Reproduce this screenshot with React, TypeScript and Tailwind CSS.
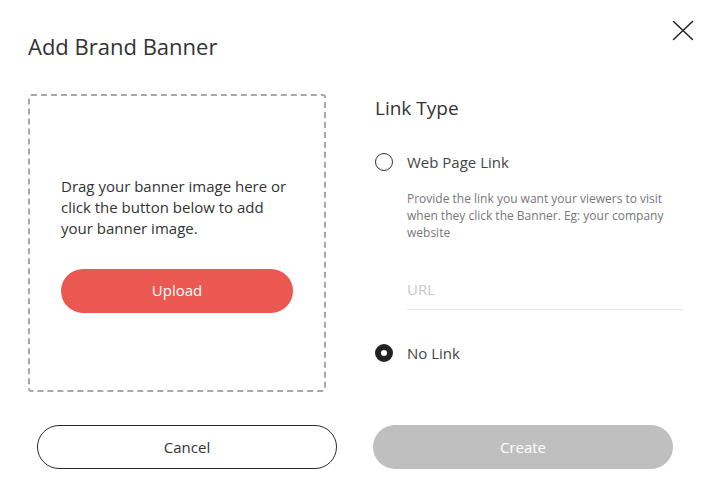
function Radio({ checked, label }: { checked?: boolean; label: string }) {
  return (
    <label className="flex items-center h-[22px]">
      {checked ? (
        <span className="w-[18px] h-[18px] rounded-full border-[6px] border-[#222]" />
      ) : (
        <span className="w-[18px] h-[18px] rounded-full border border-[#333]" />
      )}
      <span className="ml-[14px] text-[15px] text-[#444]">{label}</span>
    </label>
  );
}

export default function App() {
  return (
    <div
      className="relative w-[707px] h-[497px] bg-white text-[#333]"
      style={{ fontFamily: '"Open Sans", "Noto Sans", sans-serif' }}
    >
      <button className="absolute left-[672px] top-[20px] text-[#222]">
        <svg width="22" height="21" viewBox="0 0 22 21" fill="none" stroke="currentColor" strokeWidth="1.5" strokeLinecap="round">
          <path d="M1.5 1.5 L20.5 19.5 M20.5 1.5 L1.5 19.5" />
        </svg>
      </button>

      <h1 className="pl-[28px] pt-[31px] text-[22px] leading-[30px] text-[#333]">
        Add Brand Banner
      </h1>

      <div className="flex mt-[33px] pl-[28px]">
        <div className="w-[298px] h-[298px] border-2 border-dashed border-[#a8a8a8] rounded-[3px] flex flex-col justify-center px-[31px] pt-[2px]">
          <p className="text-[15px] leading-[21px] text-[#333]">
            Drag your banner image here or
            <br />
            click the button below to add
            <br />
            your banner image.
          </p>
          <button className="mt-[30px] h-[44px] w-full rounded-full bg-[#eb5851] text-white text-[15px]">
            Upload
          </button>
        </div>

        <div className="ml-[49px] w-[308px] pt-[1px]">
          <h2 className="text-[19px] leading-[26px] text-[#333]">Link Type</h2>
          <div className="mt-[30px]">
            <Radio label="Web Page Link" />
          </div>
          <div className="pl-[32px]">
            <p className="mt-[17px] text-[12px] leading-[17px] text-[#777]">
              Provide the link you want your viewers to visit
              <br />
              when they click the Banner. Eg: your company
              <br />
              website
            </p>
            <input
              placeholder="URL"
              className="mt-[28px] w-[276px] h-[41px] border-b border-[#e6e6e6] text-[15px] outline-none placeholder:text-[#c8c8c8]"
            />
          </div>
          <div className="mt-[32px]">
            <Radio checked label="No Link" />
          </div>
        </div>
      </div>

      <div className="flex gap-[36px] pl-[37px] mt-[33px]">
        <button className="w-[300px] h-[44px] rounded-full border border-[#2a2a2a] text-[15px] text-[#333]">
          Cancel
        </button>
        <button className="w-[300px] h-[44px] rounded-full bg-[#bfbfbf] text-[15px] text-white">
          Create
        </button>
      </div>
    </div>
  );
}
